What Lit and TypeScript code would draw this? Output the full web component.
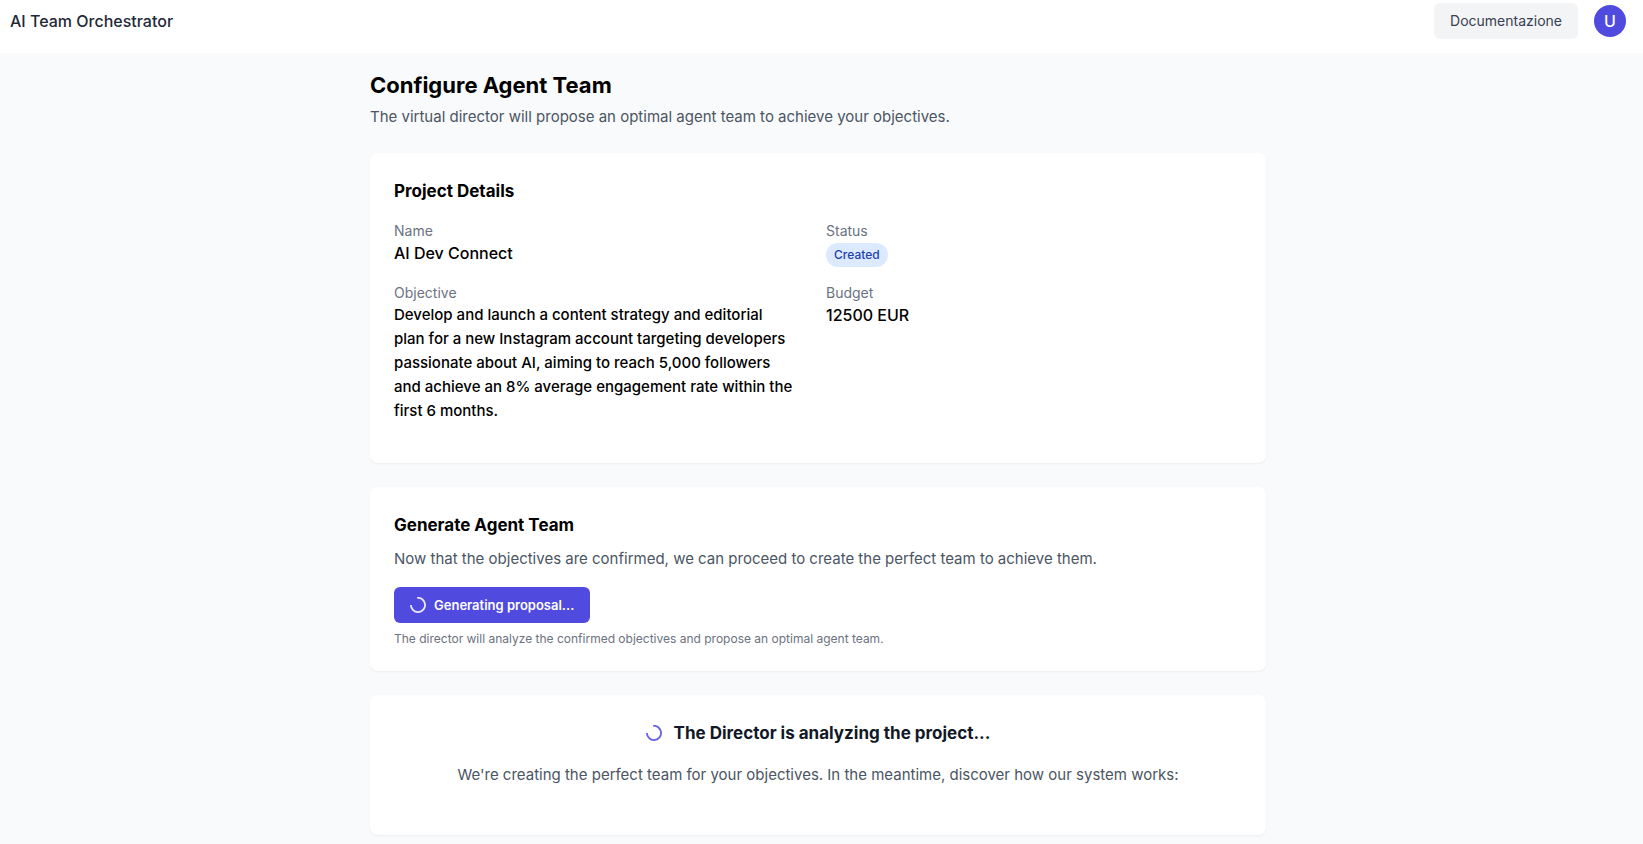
import { LitElement, html, css } from "lit";
import { customElement } from "lit/decorators.js";

@customElement("busy-spinner")
export class BusySpinner extends LitElement {
  static styles = css`
    :host {
      display: block;
      flex: none;
      width: 16px;
      height: 16px;
    }
    .ring {
      display: block;
      width: 100%;
      height: 100%;
    }
  `;

  render() {
    return html`
      <svg class="ring" viewBox="0 0 16 16" fill="none" aria-hidden="true">
        <path
          d="M7.2 .9A7.1 7.1 0 1 1 .9 8"
          stroke="currentColor"
          stroke-width="1.8"
          stroke-opacity=".88"
        />
      </svg>
    `;
  }
}

@customElement("app-root")
export class AppRoot extends LitElement {
  static styles = css`
    :host {
      display: block;
      min-height: 100vh;
      background: #f9fafb;
      color: #000;
      font-family: Inter, "Liberation Sans", sans-serif;
      font-size: 16px;
      line-height: 24px;
    }
    * {
      box-sizing: border-box;
    }
    h1,
    h2,
    p,
    dl,
    dd {
      margin: 0;
    }
    .topbar {
      display: flex;
      align-items: center;
      justify-content: space-between;
      padding: 3px 17px 14px 10px;
      background: #fff;
    }
    .brand {
      color: #1f2937;
      font-weight: 500;
    }
    .actions {
      display: flex;
      align-items: center;
      gap: 16px;
    }
    .docs {
      padding: 8px 16px;
      border-radius: 6px;
      background: #f3f4f6;
      color: #374151;
      font-size: 14px;
      line-height: 20px;
      text-decoration: none;
    }
    .avatar {
      display: grid;
      place-items: center;
      width: 32px;
      height: 32px;
      padding: 0;
      border: 0;
      border-radius: 50%;
      background: #504bde;
      color: #fff;
      font: inherit;
      font-weight: 500;
    }
    .page {
      padding: 16px 7px 8px 0;
    }
    .content {
      display: flex;
      flex-direction: column;
      gap: 24px;
      max-width: 896px;
      margin: 0 auto;
    }
    .title {
      margin-bottom: 4px;
      font-size: 22px;
      line-height: 32px;
      font-weight: 700;
    }
    .text {
      color: #4b5563;
      font-size: 15px;
    }
    .card {
      padding: 24px;
      border-radius: 8px;
      background: #fff;
      box-shadow: 0 1px 2px rgba(0, 0, 0, 0.05);
    }
    .heading {
      font-size: 17px;
      line-height: 28px;
      font-weight: 700;
    }
    .details {
      display: grid;
      grid-template-columns: 1fr 1fr;
      gap: 16px;
      margin: 16px 0;
    }
    .label {
      color: #6b7280;
      font-size: 14px;
      line-height: 20px;
    }
    .value {
      font-weight: 500;
    }
    .prose {
      max-width: 400px;
      font-size: 15px;
    }
    .status {
      display: flex;
      padding-top: 2px;
    }
    .badge {
      padding: 4px 8px;
      border-radius: 12px;
      background: #dbeafe;
      color: #1e40af;
      font-size: 12px;
      line-height: 16px;
      font-weight: 500;
    }
    .generate .text {
      margin: 8px 0 16px;
    }
    .primary {
      display: flex;
      align-items: center;
      gap: 8px;
      padding: 8px 16px;
      border: 0;
      border-radius: 6px;
      background: #504bde;
      color: #fff;
      font-family: inherit;
      font-size: 13px;
      line-height: 20px;
      font-weight: 600;
    }
    .hint {
      margin-top: 8px;
      color: #6b7280;
      font-size: 12px;
      line-height: 16px;
    }
    .progress {
      text-align: center;
    }
    .progress .heading {
      color: #111827;
    }
    .progress .text {
      margin: 16px 0 24px;
    }
    .working {
      display: flex;
      align-items: center;
      justify-content: center;
      gap: 12px;
      color: #504bde;
    }
  `;

  render() {
    return html`
      <header class="topbar">
        <span class="brand">AI Team Orchestrator</span>
        <div class="actions">
          <a class="docs" href="#docs">Documentazione</a>
          <button class="avatar" type="button">U</button>
        </div>
      </header>
      <main class="page">
        <div class="content">
          <div>
            <h1 class="title">Configure Agent Team</h1>
            <p class="text">
              The virtual director will propose an optimal agent team to achieve your objectives.
            </p>
          </div>
          <section class="card">
            <h2 class="heading">Project Details</h2>
            <dl class="details">
              <div>
                <dt class="label">Name</dt>
                <dd class="value">AI Dev Connect</dd>
              </div>
              <div>
                <dt class="label">Status</dt>
                <dd class="status"><span class="badge">Created</span></dd>
              </div>
              <div>
                <dt class="label">Objective</dt>
                <dd class="value prose">
                  Develop and launch a content strategy and editorial plan for a new Instagram
                  account targeting developers passionate about AI, aiming to reach 5,000 followers
                  and achieve an 8% average engagement rate within the first 6 months.
                </dd>
              </div>
              <div>
                <dt class="label">Budget</dt>
                <dd class="value">12500 EUR</dd>
              </div>
            </dl>
          </section>
          <section class="card generate">
            <h2 class="heading">Generate Agent Team</h2>
            <p class="text">
              Now that the objectives are confirmed, we can proceed to create the perfect team to
              achieve them.
            </p>
            <button class="primary" type="button">
              <busy-spinner></busy-spinner>
              Generating proposal...
            </button>
            <p class="hint">
              The director will analyze the confirmed objectives and propose an optimal agent team.
            </p>
          </section>
          <section class="card progress">
            <div class="working">
              <busy-spinner></busy-spinner>
              <h2 class="heading">The Director is analyzing the project...</h2>
            </div>
            <p class="text">
              We're creating the perfect team for your objectives. In the meantime, discover how our
              system works:
            </p>
          </section>
        </div>
      </main>
    `;
  }
}
